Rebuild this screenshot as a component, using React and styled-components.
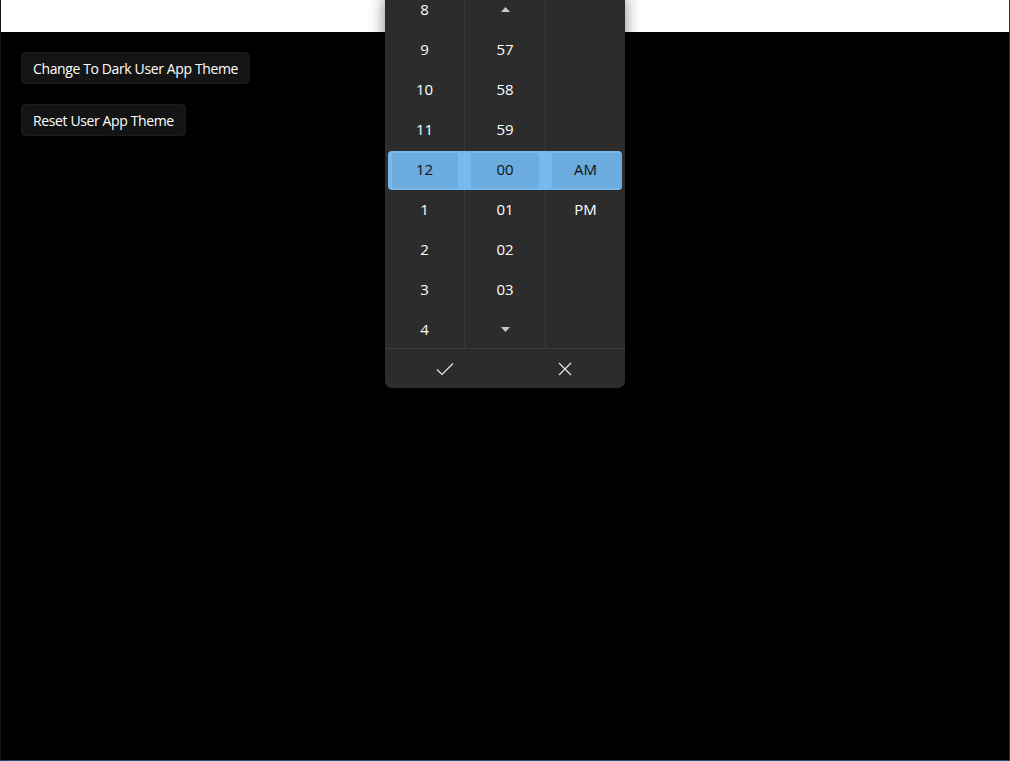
import styled, { createGlobalStyle } from 'styled-components'

const GlobalStyle = createGlobalStyle`
  html, body {
    margin: 0;
    padding: 0;
    background: #000;
  }

  body {
    font-family: 'Open Sans', 'Noto Sans', sans-serif;
  }
`

const Window = styled.div`
  position: relative;
  width: 1010px;
  height: 761px;
  box-sizing: border-box;
  display: flex;
  flex-direction: column;
  background: #000;
  border-left: 1px solid #161616;
  border-right: 1px solid #1d3658;
  border-bottom: 1px solid #1d4f75;
  overflow: hidden;
`

const TitleBar = styled.div`
  height: 32px;
  flex-shrink: 0;
  background: #fff;
`

const Content = styled.main`
  display: flex;
  flex-direction: column;
  align-items: flex-start;
  gap: 20px;
  padding: 20px;
`

const Button = styled.button`
  height: 32px;
  padding: 0 11px;
  border: 1px solid #1c1c1c;
  border-radius: 4px;
  background: #141414;
  color: #fff;
  font-family: inherit;
  font-size: 14px;
  letter-spacing: -0.38px;
  cursor: pointer;
`

const Picker = styled.div`
  position: absolute;
  top: -11px;
  left: 384px;
  width: 240px;
  display: flex;
  flex-direction: column;
  background: #2c2c2c;
  border-radius: 0 0 7px 7px;
  box-shadow: 0 8px 16px rgba(0, 0, 0, 0.5);
  overflow: hidden;
`

const List = styled.div`
  position: relative;
  height: 359px;
  display: grid;
  grid-template-columns: 79px 81px 80px;
  overflow: hidden;
`

const Highlight = styled.div`
  position: absolute;
  top: 162px;
  left: 3px;
  right: 3px;
  height: 39px;
  border-radius: 4px;
  background: #76b9ee;
  display: grid;
  grid-template-columns: 76px 81px 1fr;
`

const HighlightCell = styled.div`
  margin: 2px ${p => p.$right}px 2px ${p => p.$left}px;
  border-radius: 2px;
  background: #6babde;
`

const Column = styled.div`
  position: relative;
  display: flex;
  flex-direction: column;
  border-left: ${p => (p.$first ? 'none' : '1px solid rgba(255, 255, 255, 0.07)')};
`

const Cell = styled.div`
  height: 40px;
  flex-shrink: 0;
  display: flex;
  align-items: center;
  justify-content: center;
  color: ${p => (p.$selected ? '#111' : '#fff')};
  font-size: 15px;
  position: relative;
  z-index: 1;
`

const Caret = styled.svg`
  width: 9px;
  height: 5px;
  fill: #c8c8c8;
`

const Footer = styled.div`
  height: 39px;
  display: grid;
  grid-template-columns: 1fr 1fr;
  border-top: 1px solid #3a3a3a;
`

const FooterButton = styled.button`
  display: flex;
  align-items: center;
  justify-content: center;
  border: none;
  background: transparent;
  padding: 0;
  cursor: pointer;
`

const hours = ['8', '9', '10', '11', '12', '1', '2', '3', '4']
const minutes = ['up', '57', '58', '59', '00', '01', '02', '03', 'down']
const periods = ['', '', '', '', 'AM', 'PM', '', '', '']

function CaretIcon({ down }) {
  return (
    <Caret viewBox="0 0 9 5">
      {down ? <path d="M0 0 L9 0 L4.5 5 Z" /> : <path d="M0 5 L9 5 L4.5 0 Z" />}
    </Caret>
  )
}

function renderCell(value, index) {
  const selected = index === 4
  if (value === 'up' || value === 'down') {
    return (
      <Cell key={index}>
        <CaretIcon down={value === 'down'} />
      </Cell>
    )
  }
  return (
    <Cell key={index} $selected={selected}>
      {value}
    </Cell>
  )
}

export default function App() {
  return (
    <>
      <GlobalStyle />
      <Window>
        <TitleBar />
        <Content>
          <Button>Change To Dark User App Theme</Button>
          <Button>Reset User App Theme</Button>
        </Content>

        <Picker>
          <List>
            <Highlight>
              <HighlightCell $left={4} $right={6} />
              <HighlightCell $left={7} $right={6} />
              <HighlightCell $left={7} $right={0} />
            </Highlight>
            <Column $first>{hours.map(renderCell)}</Column>
            <Column>{minutes.map(renderCell)}</Column>
            <Column>{periods.map(renderCell)}</Column>
          </List>
          <Footer>
            <FooterButton aria-label="Accept">
              <svg width="18" height="14" viewBox="0 0 18 14" fill="none" stroke="#e6e6e6" strokeWidth="1.2">
                <path d="M1 7.5 L6 12.5 L17 1.5" />
              </svg>
            </FooterButton>
            <FooterButton aria-label="Dismiss">
              <svg width="14" height="14" viewBox="0 0 14 14" fill="none" stroke="#e6e6e6" strokeWidth="1.2">
                <path d="M1 1 L13 13 M13 1 L1 13" />
              </svg>
            </FooterButton>
          </Footer>
        </Picker>
      </Window>
    </>
  )
}
